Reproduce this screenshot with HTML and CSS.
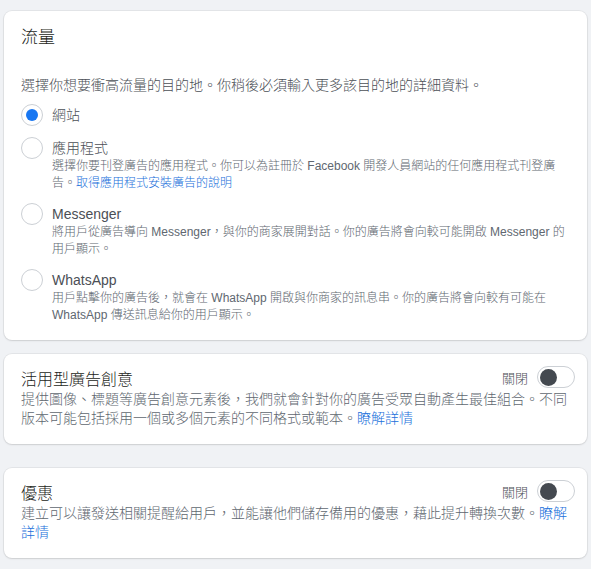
FILE: index.html
```html
<!DOCTYPE html>
<html lang="zh-Hant">
<head>
    <meta charset="UTF-8">
    <meta name="viewport" content="width=device-width, initial-scale=1.0">
    <title>流量</title>
    <link rel="stylesheet" href="styles.css">
</head>
<body>

    <div class="card traffic">
        <h2 class="cardTitle">流量</h2>
        <p class="intro">選擇你想要衝高流量的目的地。你稍後必須輸入更多該目的地的詳細資料。</p>

        <ul class="optionList">
            <li class="option">
                <span class="radio checked"></span>
                <div class="optionText">
                    <div class="optionLabel">網站</div>
                </div>
            </li>
            <li class="option">
                <span class="radio"></span>
                <div class="optionText">
                    <div class="optionLabel">應用程式</div>
                    <div class="optionDesc">選擇你要刊登廣告的應用程式。你可以為註冊於 Facebook 開發人員網站的任何應用程式刊登廣告。<a href="#">取得應用程式安裝廣告的說明</a></div>
                </div>
            </li>
            <li class="option">
                <span class="radio"></span>
                <div class="optionText">
                    <div class="optionLabel">Messenger</div>
                    <div class="optionDesc">將用戶從廣告導向 Messenger，與你的商家展開對話。你的廣告將會向較可能開啟 Messenger 的用戶顯示。</div>
                </div>
            </li>
            <li class="option">
                <span class="radio"></span>
                <div class="optionText">
                    <div class="optionLabel">WhatsApp</div>
                    <div class="optionDesc">用戶點擊你的廣告後，就會在 WhatsApp 開啟與你商家的訊息串。你的廣告將會向較有可能在 WhatsApp 傳送訊息給你的用戶顯示。</div>
                </div>
            </li>
        </ul>
    </div>

    <div class="card setting creative">
        <div class="settingHead">
            <h3 class="settingTitle">活用型廣告創意</h3>
            <div class="switchWrap">
                <span class="switchLabel">關閉</span>
                <span class="switch"><span class="knob"></span></span>
            </div>
        </div>
        <p class="settingDesc">提供圖像、標題等廣告創意元素後，我們就會針對你的廣告受眾自動產生最佳組合。不同版本可能包括採用一個或多個元素的不同格式或範本。<a href="#">瞭解詳情</a></p>
    </div>

    <div class="card setting offers">
        <div class="settingHead">
            <h3 class="settingTitle">優惠</h3>
            <div class="switchWrap">
                <span class="switchLabel">關閉</span>
                <span class="switch"><span class="knob"></span></span>
            </div>
        </div>
        <p class="settingDesc">建立可以讓發送相關提醒給用戶，並能讓他們儲存備用的優惠，藉此提升轉換次數。<a href="#">瞭解詳情</a></p>
    </div>

</body>
</html>
```

FILE: styles.css
```css
body {
    margin: 0;
    padding: 11px 4px;
    background: #f0f2f5;
    font-family: "Liberation Sans", "Noto Sans CJK TC", sans-serif;
    font-weight: 300;
    color: #4b4f56;
}
a {
    color: #216fdb;
    text-decoration: none;
}
.card {
    background: #fff;
    border-radius: 8px;
    box-shadow: 0 0 0 1px rgba(0, 0, 0, 0.05), 0 1px 2px rgba(0, 0, 0, 0.1);
    padding: 12px 12px 16px 17px;
}
.traffic {
    padding-right: 21px;
}
.creative {
    margin-top: 14px;
}
.offers {
    margin-top: 24px;
}
.cardTitle {
    margin: 3px 0 0 0;
    font-size: 17px;
    font-weight: 300;
    line-height: 24px;
    color: #1c1e21;
}
.intro {
    margin: 25px 0 10px 0;
    font-size: 14px;
    line-height: 20px;
}
.optionList {
    list-style: none;
    margin: 0;
    padding: 0;
    display: flex;
    flex-direction: column;
    gap: 12px;
}
.option {
    display: flex;
    align-items: flex-start;
    gap: 9px;
}
.radio {
    flex: none;
    width: 22px;
    height: 22px;
    margin-top: -1px;
    box-sizing: border-box;
    border: 1px solid #ccd0d5;
    border-radius: 50%;
    display: flex;
    align-items: center;
    justify-content: center;
}
.radio.checked::after {
    content: "";
    width: 12px;
    height: 12px;
    border-radius: 50%;
    background: #1877f2;
}
.optionText {
    flex: 1;
}
.optionLabel {
    font-size: 14px;
    line-height: 20px;
    color: #4b4f56;
}
.optionDesc {
    font-size: 12px;
    line-height: 17px;
    color: #606770;
}
.settingHead {
    display: flex;
    justify-content: space-between;
    align-items: flex-start;
}
.settingTitle {
    margin: 4px 0 0 0;
    font-size: 16px;
    font-weight: 300;
    line-height: 20px;
    color: #1c1e21;
}
.switchWrap {
    display: flex;
    align-items: center;
    gap: 9px;
}
.switchLabel {
    font-size: 13px;
    color: #4b4f56;
}
.switch {
    width: 38px;
    height: 22px;
    box-sizing: border-box;
    border: 1px solid #ccd0d5;
    border-radius: 11px;
    background: #fff;
    display: flex;
    align-items: center;
    padding-left: 2px;
}
.knob {
    width: 17px;
    height: 17px;
    border-radius: 50%;
    background: #444950;
}
.settingDesc {
    margin: 0;
    font-size: 14px;
    line-height: 19px;
    color: #606770;
}
```
